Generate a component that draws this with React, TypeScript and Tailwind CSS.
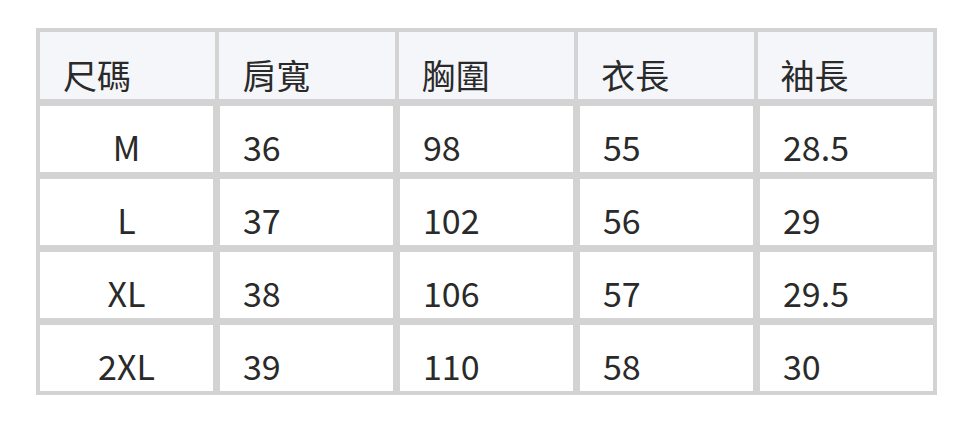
import React from "react";

const headers = ["尺碼", "肩寬", "胸圍", "衣長", "袖長"];
const rows = [
  ["M", "36", "98", "55", "28.5"],
  ["L", "37", "102", "56", "29"],
  ["XL", "38", "106", "57", "29.5"],
  ["2XL", "39", "110", "58", "30"],
];

const font = { fontFamily: '"Noto Sans CJK TC", "Noto Sans", sans-serif' };

export default function App() {
  return (
    <div className="w-[972px] h-[422px] bg-white pt-[28px] pl-[36px]" style={font}>
      <div className="w-[901px] bg-[#d3d3d3] p-[4px] flex flex-col gap-[7px]">
        <div className="grid grid-cols-5 gap-[4px] h-[67px]">
          {headers.map((h) => (
            <div
              key={h}
              className="bg-[#f5f6fa] flex items-end pl-[23px] pb-[7px] text-[34px] leading-none text-[#2a2a2a]"
            >
              {h}
            </div>
          ))}
        </div>
        {rows.map((r, i) => (
          <div key={i} className="grid grid-cols-5 gap-[7px] h-[66px]">
            {r.map((c, j) => (
              <div
                key={j}
                className={
                  j === 0
                    ? "bg-white flex items-end justify-center pb-[8px] text-[34px] leading-none text-[#2a2a2a]"
                    : "bg-white flex items-end pl-[23px] pb-[8px] text-[34px] leading-none text-[#2a2a2a]"
                }
              >
                {c}
              </div>
            ))}
          </div>
        ))}
      </div>
    </div>
  );
}
